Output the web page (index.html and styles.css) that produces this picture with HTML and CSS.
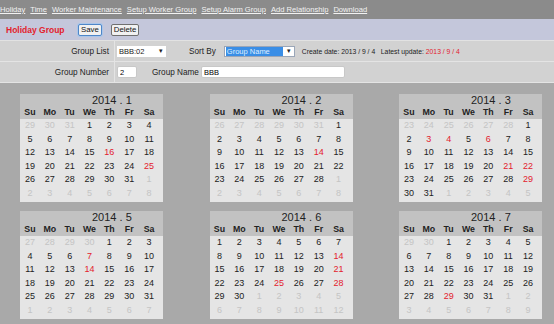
FILE: index.html
```html
<!DOCTYPE html>
<html lang="en">
<head>
    <meta charset="UTF-8">
    <meta name="viewport" content="width=device-width, initial-scale=1.0">
    <title>Holiday Group</title>
    <link rel="stylesheet" href="styles.css">
</head>
<body>
    <div class="nav">
        <a href="#">Holiday</a>
        <a href="#">Time</a>
        <a href="#">Worker Maintenance</a>
        <a href="#">Setup Worker Group</a>
        <a href="#">Setup Alarm Group</a>
        <a href="#">Add Relationship</a>
        <a href="#">Download</a>
    </div>

    <div class="titlebar">
        <span class="title">Holiday Group</span>
        <button class="btn btn-focus">Save</button>
        <button class="btn">Delete</button>
    </div>

    <div class="form">
        <div class="form-row">
            <div class="label-cell">Group List</div>
            <div class="field-cell">
                <div class="select select-list"><span class="select-text">BBB:02</span><span class="arrow">&#9662;</span></div>
                <span class="inline-label sort-label">Sort By</span>
                <div class="select select-sort"><span class="select-text selected">Group Name</span><span class="arrow">&#9662;</span></div>
                <span class="dates">Create date: 2013 / 9 / 4 &nbsp; Latest update: <span class="red">2013 / 9 / 4</span></span>
            </div>
        </div>
        <div class="form-row">
            <div class="label-cell">Group Number</div>
            <div class="field-cell">
                <input class="input input-number" type="text" value="2">
                <span class="inline-label name-label">Group Name</span>
                <input class="input input-name" type="text" value="BBB">
            </div>
        </div>
    </div>

    <div class="calendars" id="calendars"></div>

    <script>
        const months = [[2014, 0], [2014, 1], [2014, 2], [2014, 4], [2014, 5], [2014, 6]];
        const holidays = {
            '2014-1': [16, 25],
            '2014-2': [14],
            '2014-3': [3, 4, 6, 21, 22, 29],
            '2014-5': [7, 14],
            '2014-6': [14, 21, 25, 28],
            '2014-7': [29]
        };
        const dows = ['Su', 'Mo', 'Tu', 'We', 'Th', 'Fr', 'Sa'];
        const box = document.getElementById('calendars');

        months.forEach(([year, month]) => {
            const key = year + '-' + (month + 1);
            const red = holidays[key] || [];
            const first = new Date(year, month, 1).getDay();

            let html = '<div class="cal"><div class="cal-head">';
            html += '<div class="cal-title">' + year + ' . ' + (month + 1) + '</div>';
            html += '<div class="cal-dows">' + dows.map(d => '<span>' + d + '</span>').join('') + '</div>';
            html += '</div><div class="cal-body">';

            for (let i = 0; i < 42; i++) {
                const d = new Date(year, month, 1 - first + i);
                let cls = 'day';
                if (d.getMonth() !== month) cls += ' other';
                else if (red.includes(d.getDate())) cls += ' holiday';
                html += '<span class="' + cls + '">' + d.getDate() + '</span>';
            }
            html += '</div></div>';
            box.innerHTML += html;
        });
    </script>
</body>
</html>
```

FILE: styles.css
```css
body {
    margin: 0;
    font-family: "Liberation Sans", Arial, sans-serif;
    background-color: #a9a9a9;
    color: #222;
}
.nav {
    height: 19px;
    background: #8b8b8b;
    display: flex;
    align-items: center;
    padding-left: 0;
    white-space: nowrap;
}
.nav a {
    color: #f2f2f2;
    font-size: 7.6px;
    margin-right: 5px;
    text-decoration: underline;
}
.titlebar {
    height: 21px;
    background: #c4c7db;
    display: flex;
    align-items: center;
    padding-left: 6px;
    border-bottom: 1px solid #e2e2e2;
}
.title {
    color: #e3212d;
    font-weight: bold;
    font-size: 8.5px;
    width: 72px;
}
.btn {
    font-family: "Liberation Sans", Arial, sans-serif;
    font-size: 7.8px;
    height: 12px;
    padding: 0 2px;
    margin-right: 9px;
    background: #f1f1f1;
    border: 1px solid #707070;
    border-radius: 2px;
    color: #111;
    line-height: 10px;
}
.btn-focus {
    border-color: #4f86c8;
    box-shadow: 0 0 0 1px #a9c6ea;
}
.form {
    background: #d2d2d2;
}
.form-row {
    display: grid;
    grid-template-columns: 115px 1fr;
    height: 20px;
    border-bottom: 1px solid #e4e4e4;
}
.label-cell {
    text-align: right;
    padding-right: 5px;
    font-size: 8.2px;
    display: flex;
    align-items: center;
    justify-content: flex-end;
    border-right: 1px solid #e4e4e4;
}
.field-cell {
    display: flex;
    align-items: center;
    padding-left: 2px;
    font-size: 8.2px;
    white-space: nowrap;
}
.select {
    height: 11px;
    background: #fff;
    display: flex;
    align-items: center;
    font-size: 7.5px;
    box-sizing: border-box;
}
.select-list {
    width: 49px;
}
.select-sort {
    width: 71px;
    border: 1px solid #9aa6b8;
}
.select-text {
    flex: 1;
    padding-left: 2px;
    height: 100%;
    display: flex;
    align-items: center;
}
.select-text.selected {
    background: #3a8ee6;
    color: #dfefff;
    margin: 1px;
    padding-left: 1px;
}
.arrow {
    width: 10px;
    text-align: center;
    font-size: 7px;
}
.sort-label {
    margin-left: 23px;
    margin-right: 8px;
}
.dates {
    margin-left: 7px;
    font-size: 6.8px;
}
.red {
    color: #e3212d;
}
.input {
    height: 12px;
    box-sizing: border-box;
    border: 1px solid #c8c8c8;
    border-radius: 2px;
    background: #fff;
    font-family: "Liberation Sans", Arial, sans-serif;
    font-size: 7.5px;
    padding: 0 2px;
    margin: 0;
}
.input-number {
    width: 20px;
}
.name-label {
    margin-left: 15px;
    margin-right: 2px;
}
.input-name {
    width: 144px;
}
.calendars {
    display: grid;
    grid-template-columns: repeat(3, 143px);
    column-gap: 46.5px;
    row-gap: 9px;
    padding: 11px 0 0 20px;
}
.cal {
    width: 143px;
}
.cal-head {
    background: #c2c2c2;
    height: 25px;
}
.cal-title {
    padding-left: 72px;
    font-size: 11px;
    line-height: 12px;
    height: 12px;
}
.cal-dows,
.cal-body {
    display: grid;
    grid-template-columns: repeat(7, 1fr);
    padding-right: 4px;
    text-align: center;
}
.cal-dows {
    font-weight: bold;
    font-size: 8.8px;
    line-height: 13px;
}
.cal-body {
    background: #e5e5e5;
    grid-auto-rows: 13.5px;
    padding-bottom: 2px;
    font-size: 9px;
    line-height: 12px;
}
.day.other {
    color: #c4c4c4;
}
.day.holiday {
    color: #e3212d;
}
```
